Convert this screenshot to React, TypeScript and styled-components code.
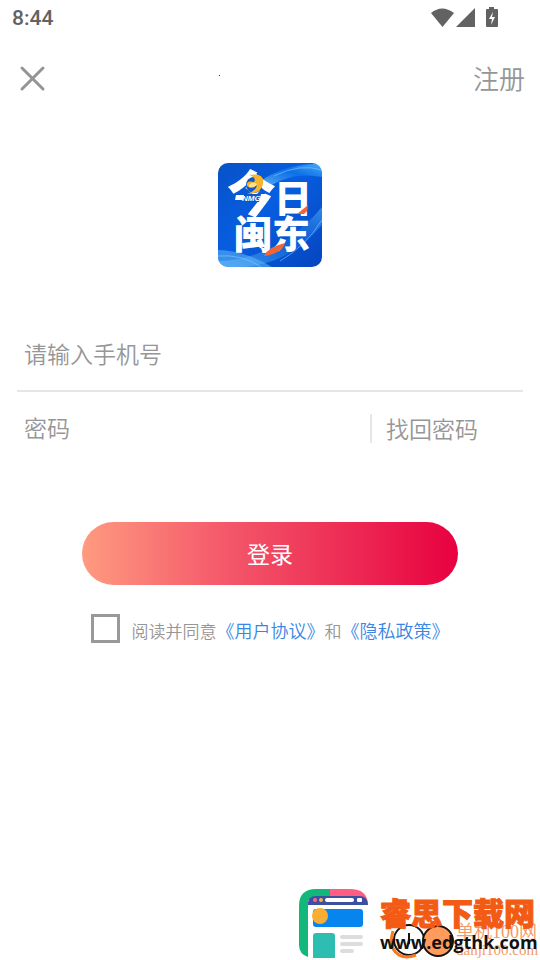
import React, { useState } from "react";
import styled, { createGlobalStyle } from "styled-components";

const GlobalStyle = createGlobalStyle`
  *, *::before, *::after { box-sizing: border-box; }
  body { margin: 0; background: #fff; }
  body, button, input {
    font-family: "Noto Sans CJK SC", sans-serif;
    font-weight: 350;
  }
`;

const Page = styled.main`
  position: relative;
  min-height: 100vh;
  display: flex;
  flex-direction: column;
  overflow: hidden;
  background: #fff;
  color: #969696;
`;

const StatusBar = styled.div`
  display: flex;
  align-items: center;
  justify-content: space-between;
  height: 36px;
  padding: 0 42px 0 12px;
  color: #626262;
  font: 500 21px/36px Roboto, sans-serif;
`;

const StatusIcons = styled.div`
  display: flex;
  align-items: center;
`;

const Header = styled.header`
  display: grid;
  grid-template-columns: 1fr 104px 1fr;
  align-items: center;
  height: 84px;
  padding: 0 15px 0 16px;
`;

const PlainButton = styled.button`
  border: 0;
  padding: 0;
  background: none;
  color: #969696;
  font-size: 26px;
  line-height: 36px;
  cursor: pointer;
`;

const CloseButton = styled(PlainButton)`
  justify-self: start;
  display: flex;
`;

const RegisterButton = styled(PlainButton)`
  justify-self: end;
`;

const TitleDot = styled.span`
  width: 1px;
  height: 1px;
  margin-bottom: 6px;
  background: #333;
`;

const LogoArea = styled.div`
  display: flex;
  justify-content: center;
  padding: 43px 0 51px;
`;

const LogoLetters = styled.g`
  fill: #fff;
  font-weight: 900;
  font-style: oblique 8deg;
`;

const Form = styled.form`
  display: flex;
  flex-direction: column;
`;

const Field = styled.div<{ $ruled?: boolean }>`
  display: flex;
  align-items: center;
  height: 74px;
  margin: 0 17px;
  padding: 0 7px;
  border-bottom: 2px solid ${(p) => (p.$ruled ? "#e6e6e6" : "transparent")};
`;

const TextInput = styled.input`
  flex: 1;
  min-width: 0;
  height: 40px;
  padding: 0 0 2px;
  border: 0;
  outline: 0;
  background: transparent;
  color: #555;
  font-size: 23px;
  &::placeholder { color: #969696; opacity: 1; }
`;

const FindPassword = styled(PlainButton)`
  width: 146px;
  padding-left: 14px;
  border-left: 2px solid #e6e6e6;
  font-size: 23px;
  line-height: 29px;
  text-align: left;
`;

const LoginButton = styled.button`
  height: 63px;
  margin: 56px 82px 0;
  padding: 0 0 2px;
  border: 0;
  border-radius: 32px;
  background: linear-gradient(90deg, #ff9a80 0%, #f4586a 38%, #ee3358 65%, #e80040 100%);
  color: #fff;
  font-size: 23px;
  font-weight: 400;
  cursor: pointer;
`;

const Agreement = styled.div`
  display: flex;
  align-items: center;
  justify-content: center;
  gap: 12px;
  margin-top: 27px;
`;

const CheckBox = styled.input`
  appearance: none;
  flex: none;
  width: 29px;
  height: 29px;
  margin: 0;
  border: 3px solid #999;
  background: #fff;
  &:checked { background: #999; box-shadow: inset 0 0 0 4px #fff; }
`;

const AgreementText = styled.label`
  padding-top: 5px;
  font-size: 17px;
  line-height: 26px;
  white-space: nowrap;
`;

const PolicyLink = styled.a`
  color: #3a86e4;
  font-size: 18px;
  text-decoration: none;
`;

const Watermark = styled.aside`
  position: absolute;
  right: 2px;
  bottom: 0;
  display: flex;
  pointer-events: none;
`;

const CloseIcon = () => (
  <svg width="32" height="32" viewBox="0 0 32 32" aria-hidden="true">
    <path d="M6 6 27 27M27 6 6 27" stroke="#949494" strokeWidth="3" strokeLinecap="round" />
  </svg>
);

const DeviceIcons = () => (
  <svg width="68" height="24" viewBox="0 0 68 24" fill="#626262" aria-hidden="true">
    <path d="M1 7Q12-2 24 7L12.500 21Z" />
    <path d="M45 2V21H26Z" />
    <path d="M59 1h5v2h3q1 0 1 1v16q0 1-1 1H57q-1 0-1-1V4q0-1 1-1h2Z" />
    <path d="M63 6 59 13h3l-1 6 4-8h-3Z" fill="#fff" />
  </svg>
);

const AppLogo = () => (
  <svg width="104" height="104" viewBox="0 0 104 104" role="img" aria-label="今日闽东">
    <defs>
      <clipPath id="tile"><rect width="104" height="104" rx="10" /></clipPath>
      <linearGradient id="sky" x1="0" y1="0" x2="1" y2="1">
        <stop offset="0" stopColor="#0752c8" />
        <stop offset=".45" stopColor="#075ee0" />
        <stop offset="1" stopColor="#0645bf" />
      </linearGradient>
      <linearGradient id="glow" x1="0" y1="1" x2="1" y2="0">
        <stop offset="0" stopColor="#7fd0ff" stopOpacity=".9" />
        <stop offset=".6" stopColor="#1682f2" stopOpacity=".5" />
        <stop offset="1" stopColor="#63c4ff" stopOpacity=".8" />
      </linearGradient>
    </defs>
    <g clipPath="url(#tile)">
      <rect width="104" height="104" fill="url(#sky)" />
      <path d="M40 20Q66 0 104 1V14Q72 8 48 26Z" fill="url(#glow)" />
      <path d="M0 98Q60 96 104 44V62Q68 104 20 104H0Z" fill="url(#glow)" opacity=".6" />
      <path d="M0 87Q28 88 54 104H0Z" fill="#63baf6" opacity=".55" />
      <path d="M0 93Q24 91 43 104M56 13Q82 0 104 7M62 98Q88 83 104 57" fill="none" stroke="#82cfff" opacity=".6" />
      <LogoLetters>
        <text x="9" y="49" fontSize="49">今</text>
        <text x="56" y="49" fontSize="38">日</text>
        <text x="16" y="85" fontSize="38">闽东</text>
      </LogoLetters>
      <path d="M16 31H43L41 39H14Z" fill="#0858cf" />
      <path d="M18 32H26L25 37H17Z" fill="#fff" />
      <text x="24" y="38" fill="#fff" fontFamily="Liberation Sans" fontSize="8" fontWeight="700" fontStyle="italic">NMG</text>
      <circle cx="36" cy="22" r="8" fill="#0858cf" />
      <path d="M31 12Q47 9 45 21Q43 31 29 31Q38 28 39 22Q34 27 29 23Q28 17 36 19Q39 15 31 12Z" fill="#f6b52c" />
      <path d="M31 22Q35 18 39 21Q37 25 31 24Z" fill="#ffe09a" />
      <path d="M79 51 90 42 89 48 86 51ZM46 93Q50 84 67 80L64 86Q54 93 46 93Z" fill="#f26534" />
    </g>
  </svg>
);

const SiteMark = () => (
  <svg width="242" height="74" viewBox="0 0 242 74" role="img" aria-label="睿思下载网 www.edgthk.com">
    <path d="M12 71Q3 68 3 59V20Q3 3 20 3H36V14H12V71Z" fill="#12b77c" />
    <path d="M34 3H54Q71 3 72 18H34Z" fill="#ff5d82" />
    <path d="M12 18Q12 10 20 10H63Q72 10 72 19H12Z" fill="#3c4fa1" />
    <circle cx="19" cy="14" r="2" fill="#ff6686" />
    <circle cx="25" cy="14" r="2" fill="#f8b13b" />
    <rect x="29" y="12" width="29" height="4" rx="2" fill="#fff" />
    <rect x="61" y="12" width="5" height="4" rx="1" fill="#fff" />
    <rect x="17" y="23" width="50" height="18" rx="3" fill="#0785ef" />
    <circle cx="24" cy="30" r="8" fill="#f8ad33" />
    <path d="M17 72V50Q17 47 20 47H36Q39 47 39 50V72Z" fill="#2dbeb1" />
    <path d="M46 51H65M46 58H65M46 65H56" stroke="#ddd" strokeWidth="4" strokeLinecap="round" />
    <circle cx="113" cy="54" r="15" fill="#fff" stroke="#171310" strokeWidth="2" />
    <path d="M113 47V58" stroke="#171310" strokeWidth="2" />
    <path d="M97 45Q92 62 103 69Q110 73 120 69" fill="none" stroke="#f87920" strokeWidth="3" />
    <circle cx="142" cy="55" r="15" fill="#ff9c5d" stroke="#171310" strokeWidth="2" />
    <g fill="#f29a67" fontFamily='"Liberation Serif", "Noto Sans CJK SC", serif'>
      <text x="160" y="52" fontSize="18">单机100网</text>
      <text x="160" y="69" fontSize="15">danji100.com</text>
    </g>
    <text x="84" y="39" fill="#f35a13" stroke="#f35a13" fontSize="31" fontWeight="900">睿思下载网</text>
    <text x="84" y="63" fill="#111" fontFamily="Open Sans" fontSize="18" fontWeight="700">www.edgthk.com</text>
  </svg>
);

export default function App() {
  const [agreed, setAgreed] = useState(false);
  return (
    <>
      <GlobalStyle />
      <Page lang="zh-CN">
        <StatusBar>
          <span>8:44</span>
          <StatusIcons><DeviceIcons /></StatusIcons>
        </StatusBar>
        <Header>
          <CloseButton type="button" aria-label="关闭"><CloseIcon /></CloseButton>
          <TitleDot />
          <RegisterButton type="button">注册</RegisterButton>
        </Header>
        <LogoArea><AppLogo /></LogoArea>
        <Form onSubmit={(e: React.FormEvent) => e.preventDefault()}>
          <Field $ruled>
            <TextInput type="tel" placeholder="请输入手机号" aria-label="请输入手机号" />
          </Field>
          <Field>
            <TextInput type="password" placeholder="密码" aria-label="密码" />
            <FindPassword type="button">找回密码</FindPassword>
          </Field>
          <LoginButton type="submit">登录</LoginButton>
          <Agreement>
            <CheckBox id="agree" type="checkbox" checked={agreed} onChange={(e) => setAgreed(e.target.checked)} />
            <AgreementText htmlFor="agree">
              阅读并同意<PolicyLink href="#terms">《用户协议》</PolicyLink>和<PolicyLink href="#privacy">《隐私政策》</PolicyLink>
            </AgreementText>
          </Agreement>
        </Form>
        <Watermark><SiteMark /></Watermark>
      </Page>
    </>
  );
}
